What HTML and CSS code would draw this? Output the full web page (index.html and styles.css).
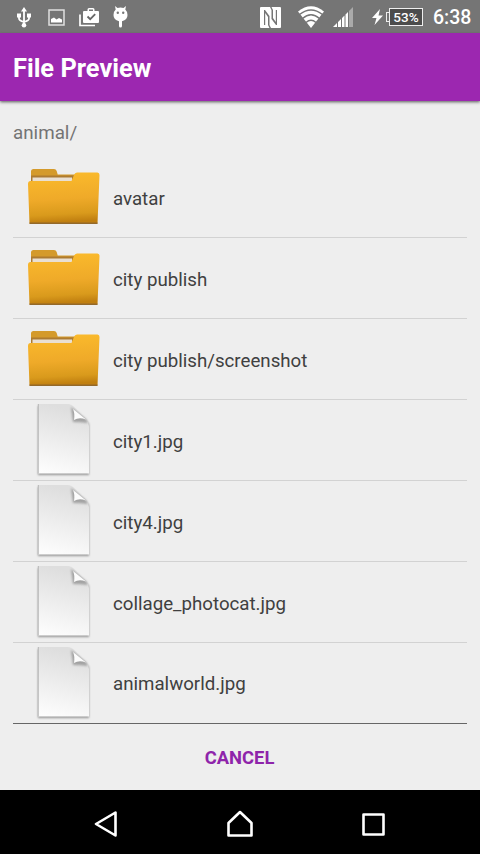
FILE: index.html
```
<!DOCTYPE html>
<html lang="en">
<head>
<meta charset="utf-8">
<title>File Preview</title>
<link rel="stylesheet" href="styles.css">
</head>
<body>
<svg class="defs" width="0" height="0" aria-hidden="true">
  <defs>
    <linearGradient id="front" x1="0" y1="0" x2="0.08" y2="1">
      <stop offset="0" stop-color="#fbbb2c"/><stop offset=".55" stop-color="#efaa29"/><stop offset=".85" stop-color="#d99a1c"/><stop offset="1" stop-color="#c07f10"/>
    </linearGradient>
    <linearGradient id="sheet" x1="0.2" y1="0" x2="0" y2="1">
      <stop offset="0" stop-color="#dedede"/><stop offset=".5" stop-color="#eee"/><stop offset="1" stop-color="#fefefe"/>
    </linearGradient>
    <filter id="soft" x="-30%" y="-30%" width="160%" height="160%"><feGaussianBlur stdDeviation="1.2"/></filter>
    <symbol id="folder" viewBox="0 0 76 62">
      <path d="M5 56V5.500Q5 3 7.500 3H28q2 0 2.700 2l1 3.500H52V56z" fill="#d49a2b"/>
      <path d="M5 9.500H49v10H5z" fill="#ad7b30"/>
      <path d="M6.500 11.500H46v8H6.500z" fill="#e9dfd2"/>
      <path d="M2 18Q2 15 4.500 15H45.500l2.500-6q.8-2.500 3-2.500H71.500q2 0 2 2.500l-2 48.500H3.500z" fill="url(#front)"/>
      <path d="M3.500 56.500H71.500v1.500H3.500z" fill="#93692a"/>
    </symbol>
    <symbol id="file" viewBox="0 0 60 76">
      <path d="M6 5H38L57 23V74H6z" fill="#666" opacity=".65" filter="url(#soft)"/>
      <path d="M6 3H35Q39 3 43 7L54 18Q57 21 57 25V72.500H6z" fill="url(#sheet)"/>
      <path d="M6.300 3V72.500" stroke="#aaa" stroke-width=".8"/>
      <path d="M39 6L41 21Q49 21 56 22L54 18z" fill="#888" opacity=".7" filter="url(#soft)"/>
      <path d="M41 8Q43 12 42 19Q47 16 54 18.500z" fill="#fcfcfc"/>
    </symbol>
  </defs>
</svg>

<header class="status">
  <div class="notifications">
    <svg width="14" height="21" viewBox="0 0 14 21" fill="none" stroke="#fff" stroke-width="1.800"><path d="M7 3V18M2 8v3.500q0 2 5 3.500M12 8v3.500q0 2-5 3.500"/><path d="M7 0l3 4.500H4zM0 6.500h4v4H0zM10 6.500h4v4h-4z" fill="#fff" stroke="none"/><circle cx="7" cy="18.200" r="2.300" fill="#fff" stroke="none"/></svg>
    <svg width="17" height="17" viewBox="0 0 17 17"><path d="M1 1h15v15H1z" fill="none" stroke="#e0e0e0" stroke-width="1.500"/><path d="M3 13.500v-3.500l3-1.500 2.500 2 2.500-1.500 3 1.500v3z" fill="#fff"/></svg>
    <svg width="20" height="19" viewBox="0 0 20 19"><path d="M1 6.500V17.500H16" fill="none" stroke="#fff" stroke-width="1.700"/><path fill="#fff" fill-rule="evenodd" d="M5 3h3.500V1.500Q8.500 0 10 0h4q1.500 0 1.500 1.500V3H19q1 0 1 1v10q0 1-1 1H5q-1 0-1-1V4q0-1 1-1zm5-1.500V3h4V1.500z"/><path d="M8.500 8.500l2.700 2.700 5-5" fill="none" stroke="#666" stroke-width="1.800"/></svg>
    <svg width="15" height="22" viewBox="0 0 15 22"><path fill="#fff" d="M2 0l2.500 2q3-1.200 6 0L13 0l-.7 3.500Q14.500 5.500 14.500 9q0 5-5.500 6.200V20q0 1.500-1.500 1.500T6 20v-4.800Q.5 14 .5 9q0-3.500 2.200-5.500z"/><circle cx="4.800" cy="6.800" r="1.200" fill="#777"/><circle cx="10.200" cy="6.800" r="1.200" fill="#777"/></svg>
  </div>
  <div class="system">
    <svg class="nfc" width="21" height="21" viewBox="0 0 21 21"><rect width="21" height="21" rx="1" fill="#fff"/><path d="M4 3v15h1.200V6L8 10v8l1.500 3H11L9.500 18V9L5 3zM17 18V3h-1.200v12L13 11V3l-1.500-3H10l1.500 3v9L16 18z" fill="#757575"/></svg>
    <svg class="wifi" width="26" height="22" viewBox="0 0 26 22"><path fill="#fff" d="M13 22L0 5.500Q13-5 26 5.500z"/><path d="M1.500 8.500Q13-.5 24.500 8.500M4.500 12.500Q13 5 21.500 12.500M8 16.500Q13 12 18 16.500" fill="none" stroke="#757575" stroke-width="1.400"/></svg>
    <svg class="signal" width="20" height="20" viewBox="0 0 20 20"><path d="M16 4l4-4v20h-4z" fill="#aaa"/><path d="M0 20l4-4v4zM5 15l3-3v8H5zM9 11l2.500-2.500V20H9zM12.500 7.500L15 5v15h-2.500z" fill="#fff"/></svg>
    <svg class="bolt" width="11" height="16" viewBox="0 0 11 16"><path fill="#fff" d="M8 0L0 9h4.500L2.500 16 11 6.500H6.500z"/></svg>
    <span class="nub"></span>
    <div class="battery">53%</div>
    <time class="clock">6:38</time>
  </div>
</header>

<h1 class="appbar">File Preview</h1>

<main class="content">
  <p class="path">animal/</p>
  <ul class="list">
    <li><svg class="folder"><use href="#folder"/></svg><span>avatar</span></li>
    <li><svg class="folder"><use href="#folder"/></svg><span>city publish</span></li>
    <li><svg class="folder"><use href="#folder"/></svg><span>city publish/screenshot</span></li>
    <li><svg class="file"><use href="#file"/></svg><span>city1.jpg</span></li>
    <li><svg class="file"><use href="#file"/></svg><span>city4.jpg</span></li>
    <li><svg class="file"><use href="#file"/></svg><span>collage_photocat.jpg</span></li>
    <li><svg class="file"><use href="#file"/></svg><span>animalworld.jpg</span></li>
  </ul>
  <button class="cancel">CANCEL</button>
</main>

<nav class="navbar">
  <svg width="24" height="26" viewBox="0 0 24 26"><path d="M2 13L21.500 1.500v23z"/></svg>
  <svg width="26" height="28" viewBox="0 0 26 28"><path d="M1.500 25.500V13L13 2l11.500 11v12.500z"/></svg>
  <svg width="23" height="23" viewBox="0 0 23 23"><path d="M1.500 1.500h20v20h-20z"/></svg>
</nav>
</body>
</html>
```
FILE: styles.css
```
* { box-sizing: border-box; }
body {
  margin: 0;
  height: 854px;
  display: flex;
  flex-direction: column;
  background: #eee;
  color: #404040;
  font-family: Roboto, sans-serif;
  overflow: hidden;
}
svg { display: block; flex: none; }
.defs { position: absolute; }

.status {
  height: 33px;
  flex: none;
  display: flex;
  justify-content: space-between;
  padding: 1px 10px 0 17px;
  background: #757575;
  color: #fff;
}
.notifications, .system { display: flex; align-items: center; }
.notifications { gap: 14px; }
.notifications svg:first-child { margin-right: 3px; }
.wifi { margin-left: 17px; }
.signal { margin-left: 9px; }
.bolt { margin-left: 19px; }
.nub { width: 3px; height: 10px; margin-left: 3px; border: 1px solid #eee; border-right: 0; }
.battery {
  width: 34px;
  height: 18px;
  border: 1px solid #eee;
  background: #4c4c4c;
  font-size: 13.500px;
  font-weight: 500;
  line-height: 16px;
  text-align: center;
}
.clock { width: 37px; margin-left: 10px; font-size: 19.500px; font-weight: 500; line-height: 30px; padding-top: 2px; }

.appbar {
  height: 68px;
  flex: none;
  margin: 0;
  padding-left: 13px;
  background: #9c27b0;
  box-shadow: 0 1px 3px #555;
  color: #fff;
  font-size: 25.400px;
  font-weight: 700;
  line-height: 70px;
  z-index: 1;
}

.content { flex: 1; padding: 18px 13px 0; display: flex; flex-direction: column; }
.path { margin: 0; height: 38px; line-height: 28px; font-size: 18.800px; color: #747474; }
.list { margin: 0; padding: 0; list-style: none; border-bottom: 1px solid #666; }
.list li {
  height: 81px;
  display: flex;
  align-items: center;
  border-bottom: 1px solid #d2d2d2;
  font-size: 18.700px;
}
.list li:last-child { border: 0; height: 80px; }
.folder { width: 76px; height: 62px; margin: 0 11px 0 13px; }
.file { width: 60px; height: 76px; margin: 0 21px 2px 19px; }
.list span { line-height: 24px; padding-top: 3px; }
.list li:last-child span { padding-top: 1px; }
.cancel {
  flex: 1;
  border: 0;
  padding: 0 1px 0 0;
  background: none;
  color: #8e24aa;
  font: 700 18.400px Roboto, sans-serif;
}

.navbar {
  height: 64px;
  flex: none;
  display: flex;
  justify-content: space-between;
  align-items: center;
  padding: 4px 95px 0 94px;
  background: #000;
}
.navbar path { fill: none; stroke: #fff; stroke-width: 2.600; stroke-linejoin: round; }
```
